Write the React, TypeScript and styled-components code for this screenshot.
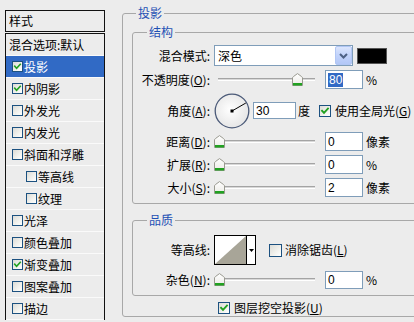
import React from "react";
import styled, { createGlobalStyle } from "styled-components";

const GlobalStyle = createGlobalStyle`
  html, body { margin: 0; padding: 0; background: #ECECEC; overflow: hidden; }
  body {
    font-family: "Noto Sans CJK SC", "Liberation Sans", sans-serif;
    font-size: 12px;
    color: #000;
  }
  * { box-sizing: border-box; }
`;

const Dialog = styled.div`
  display: flex;
  align-items: flex-start;
  width: 414px;
  height: 322px;
  overflow: hidden;
  background: #ECECEC;
`;

/* ---------- left list ---------- */
const StyleList = styled.div`
  width: 100px;
  margin: 10px 0 0 5px;
  flex-shrink: 0;
`;

const ListHeader = styled.div`
  height: 22px;
  border: 1px solid #111;
  display: flex;
  align-items: center;
  padding-left: 3px;
  line-height: 16px;
`;

const ListBody = styled.div`
  margin-top: 1px;
  border: 1px solid #111;
  border-bottom: none;
  background: #ECECEC;
`;

const Row = styled.div<{ $indent: number; $selected?: boolean }>`
  height: 22px;
  display: flex;
  align-items: center;
  gap: 1px;
  padding-left: ${(p) => p.$indent}px;
  border-bottom: 1px solid #FAFAFA;
  background: ${(p) => (p.$selected ? "#316AC5" : "transparent")};
  color: ${(p) => (p.$selected ? "#fff" : "#000")};
  line-height: 16px;
  white-space: nowrap;
`;

/* ---------- checkbox ---------- */
const Box = styled.span<{ $size: number }>`
  display: inline-flex;
  align-items: center;
  justify-content: center;
  width: ${(p) => p.$size}px;
  height: ${(p) => p.$size}px;
  border: 1px solid #1C5180;
  background: linear-gradient(135deg, #DCDCD7 0%, #F2F2EE 60%, #FFFFFF 100%);
  flex-shrink: 0;
`;

const CheckBox: React.FC<{ checked?: boolean; size?: number }> = ({ checked, size = 13 }) => (
  <Box $size={size}>
    {checked && (
      <svg width={size - 2} height={size - 2} viewBox="0 0 11 11">
        <polyline
          points="2.2,5.2 4.4,7.6 8.8,2.8"
          fill="none"
          stroke="#21A121"
          strokeWidth="2"
          strokeLinecap="square"
        />
      </svg>
    )}
  </Box>
);

/* ---------- group boxes ---------- */
const Effects = styled.fieldset`
  margin: 5px 0 0 17px;
  padding: 3px 0 0 9px;
  width: 310px;
  flex-shrink: 0;
  border: 1px solid #A8A8A8;
  border-radius: 3px;
  min-width: 0;
`;

const Legend = styled.legend<{ $offset: number }>`
  padding: 0 2px;
  margin-left: ${(p) => p.$offset}px;
  color: #1E50B4;
  font-size: 12px;
  line-height: 16px;
`;

const SubGroup = styled.fieldset<{ $top: number; $pt: number; $pb: number }>`
  margin: ${(p) => p.$top}px 0 0 0;
  padding: ${(p) => p.$pt}px 0 ${(p) => p.$pb}px 0;
  width: 295px;
  border: 1px solid #A8A8A8;
  border-radius: 3px;
  min-width: 0;
`;

const Form = styled.div<{ $rows: string; $gap: number }>`
  display: grid;
  grid-template-columns: 77px 1fr;
  grid-template-rows: ${(p) => p.$rows};
  column-gap: 4px;
  row-gap: ${(p) => p.$gap}px;
  align-items: center;
`;

const Label = styled.span`
  text-align: right;
  white-space: nowrap;
  line-height: 16px;
`;

const Controls = styled.div`
  display: flex;
  align-items: center;
  white-space: nowrap;
  line-height: 16px;
`;

const Key = styled.span`
  text-decoration: underline;
`;

/* ---------- inputs ---------- */
const SelectBox = styled.div`
  width: 139px;
  height: 21px;
  border: 1px solid #7F9DB9;
  background: #fff;
  display: flex;
  align-items: center;
  justify-content: space-between;
  padding-left: 3px;
`;

const DropButton = styled.span`
  width: 17px;
  height: 19px;
  border: 1px solid #B1C6F4;
  border-radius: 2px;
  background: linear-gradient(180deg, #DCE6FD 0%, #C3D4FB 45%, #B2C7F7 100%);
  display: flex;
  align-items: center;
  justify-content: center;
`;

const Swatch = styled.span`
  width: 30px;
  height: 16px;
  margin-left: 4px;
  background: #000;
  border: 1px solid #555;
`;

const NumField = styled.div<{ $w: number; $h: number }>`
  width: ${(p) => p.$w}px;
  height: ${(p) => p.$h}px;
  border: 1px solid #7F9DB9;
  background: #fff;
  display: flex;
  align-items: center;
  padding-left: 2px;
  line-height: 14px;
  font-family: "Liberation Sans", "Noto Sans CJK SC", sans-serif;
`;

const Selected = styled.span`
  background: #316AC5;
  color: #fff;
  padding: 0 1px;
`;

const Unit = styled.span<{ $gap?: number }>`
  margin-left: ${(p) => p.$gap ?? 3}px;
`;

const SliderWrap = styled.div`
  position: relative;
  width: 101px;
  height: 14px;
  margin-right: 10px;
  display: flex;
  align-items: center;
  padding-left: 4px;
`;

const Track = styled.div`
  flex: 1;
  height: 3px;
  border-top: 1px solid #A4A4A4;
  border-bottom: 1px solid #FFFFFF;
  background: #D8D8D8;
`;

const Thumb = styled.svg`
  position: absolute;
  top: 0;
`;

const Slider: React.FC<{ value: number }> = ({ value }) => (
  <SliderWrap>
    <Track />
    <Thumb width="11" height="13" viewBox="0 0 11 13" style={{ left: 5 + value * 0.975 - 5.5 }}>
      <defs>
        <linearGradient id="tg" x1="0" y1="0" x2="0" y2="1">
          <stop offset="0" stopColor="#FFFFFF" />
          <stop offset="1" stopColor="#ECEBE6" />
        </linearGradient>
      </defs>
      <path d="M0.5 5 Q0.5 4.2 1.5 3.5 L5.5 0.6 L9.5 3.5 Q10.5 4.2 10.5 5 L10.5 12.5 L0.5 12.5 Z" fill="url(#tg)" stroke="#9A9A90" />
      <rect x="1" y="10" width="9" height="2.5" fill="#21A121" />
    </Thumb>
  </SliderWrap>
);

const DialSvg = styled.svg`
  flex-shrink: 0;
  margin-right: 3px;
`;

const Dial: React.FC<{ angle: number }> = ({ angle }) => {
  const r = (angle * Math.PI) / 180;
  const x2 = 18 + 16 * Math.cos(r);
  const y2 = 18 - 16 * Math.sin(r);
  return (
    <DialSvg width="36" height="36" viewBox="0 0 36 36">
      <defs>
        <radialGradient id="dg" cx="0.45" cy="0.45" r="0.6">
          <stop offset="0" stopColor="#FFFFFF" />
          <stop offset="1" stopColor="#E4E4E4" />
        </radialGradient>
      </defs>
      <circle cx="18" cy="18" r="16.8" fill="url(#dg)" stroke="#4B5A78" strokeWidth="1.3" />
      <line x1="18" y1="18" x2={x2} y2={y2} stroke="#000" strokeWidth="1" />
      <rect x="16.5" y="16.5" width="3" height="3" fill="#000" />
    </DialSvg>
  );
};

const ContourPicker = styled.div`
  width: 42px;
  height: 30px;
  border: 1px solid #000;
  display: flex;
  background: #fff;
`;

const ContourArrow = styled.span`
  flex: 1;
  border-left: 1px solid #000;
  display: flex;
  align-items: center;
  justify-content: center;
`;

const Gap = styled.span<{ $w: number }>`
  display: inline-block;
  width: ${(p) => p.$w}px;
  flex-shrink: 0;
`;

const Knockout = styled.div`
  display: flex;
  align-items: center;
  gap: 4px;
  height: 16px;
  margin: 4px 0 0 86px;
  line-height: 16px;
  white-space: nowrap;
`;

const items: { label: string; checked?: boolean; indent?: boolean; selected?: boolean; box?: boolean }[] = [
  { label: "混合选项:默认", box: false },
  { label: "投影", checked: true, selected: true },
  { label: "内阴影", checked: true },
  { label: "外发光" },
  { label: "内发光" },
  { label: "斜面和浮雕" },
  { label: "等高线", indent: true },
  { label: "纹理", indent: true },
  { label: "光泽" },
  { label: "颜色叠加" },
  { label: "渐变叠加", checked: true },
  { label: "图案叠加" },
  { label: "描边" },
];

export default function App() {
  return (
    <>
      <GlobalStyle />
      <Dialog>
        <StyleList>
          <ListHeader>样式</ListHeader>
          <ListBody>
            {items.map((it) => (
              <Row
                key={it.label}
                $indent={it.box === false ? 3 : it.indent ? 20 : 6}
                $selected={it.selected}
              >
                {it.box !== false && <CheckBox checked={it.checked} size={11} />}
                {it.label}
              </Row>
            ))}
          </ListBody>
        </StyleList>

        <Effects>
          <Legend $offset={4}>投影</Legend>
          <SubGroup $top={0} $pt={5} $pb={6}>
            <Legend $offset={14}>结构</Legend>
            <Form $rows="21px 19px 35px 19px 19px 19px" $gap={4}>
              <Label>混合模式:</Label>
              <Controls>
                <SelectBox>
                  深色
                  <DropButton>
                    <svg width="9" height="6" viewBox="0 0 9 6">
                      <polyline points="1,1 4.5,4.5 8,1" fill="none" stroke="#4D6185" strokeWidth="2" />
                    </svg>
                  </DropButton>
                </SelectBox>
                <Swatch />
              </Controls>

              <Label>
                不透明度(<Key>O</Key>):
              </Label>
              <Controls>
                <Slider value={80} />
                <NumField $w={38} $h={19}>
                  <Selected>80</Selected>
                </NumField>
                <Unit>%</Unit>
              </Controls>

              <Label>
                角度(<Key>A</Key>):
              </Label>
              <Controls>
                <Dial angle={30} />
                <NumField $w={43} $h={17}>30</NumField>
                <Unit $gap={2}>度</Unit>
                <Gap $w={9} />
                <CheckBox checked size={12} />
                <Unit $gap={4}>
                  使用全局光(<Key>G</Key>)
                </Unit>
              </Controls>

              <Label>
                距离(<Key>D</Key>):
              </Label>
              <Controls>
                <Slider value={0} />
                <NumField $w={38} $h={19}>0</NumField>
                <Unit>像素</Unit>
              </Controls>

              <Label>
                扩展(<Key>R</Key>):
              </Label>
              <Controls>
                <Slider value={0} />
                <NumField $w={38} $h={19}>0</NumField>
                <Unit>%</Unit>
              </Controls>

              <Label>
                大小(<Key>S</Key>):
              </Label>
              <Controls>
                <Slider value={0} />
                <NumField $w={38} $h={19}>2</NumField>
                <Unit>像素</Unit>
              </Controls>
            </Form>
          </SubGroup>

          <SubGroup $top={8} $pt={7} $pb={6}>
            <Legend $offset={14}>品质</Legend>
            <Form $rows="30px 19px" $gap={5}>
              <Label>等高线:</Label>
              <Controls>
                <ContourPicker>
                  <svg width="31" height="28" viewBox="0 0 31 28">
                    <polygon points="0,28 31,0 31,28" fill="#A8A598" />
                  </svg>
                  <ContourArrow>
                    <svg width="5" height="3" viewBox="0 0 5 3">
                      <polygon points="0,0 5,0 2.5,3" fill="#000" />
                    </svg>
                  </ContourArrow>
                </ContourPicker>
                <Gap $w={13} />
                <CheckBox size={13} />
                <Unit $gap={3}>
                  消除锯齿(<Key>L</Key>)
                </Unit>
              </Controls>

              <Label>
                杂色(<Key>N</Key>):
              </Label>
              <Controls>
                <Slider value={0} />
                <NumField $w={38} $h={18}>0</NumField>
                <Unit>%</Unit>
              </Controls>
            </Form>
          </SubGroup>

          <Knockout>
            <CheckBox checked size={12} />
            <span>
              图层挖空投影(<Key>U</Key>)
            </span>
          </Knockout>
        </Effects>
      </Dialog>
    </>
  );
}
